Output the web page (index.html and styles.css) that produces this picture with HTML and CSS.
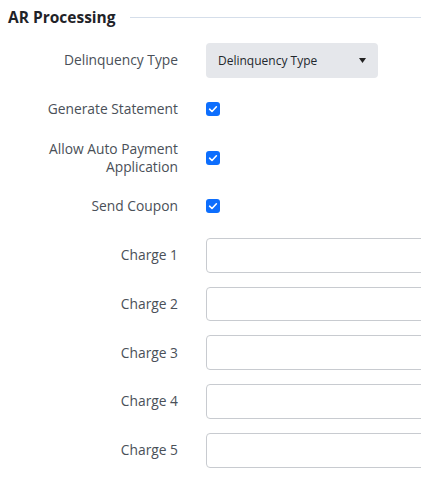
FILE: index.html
```html
<!DOCTYPE html>
<html>
<head>
<meta charset="utf-8">
<link rel="stylesheet" href="styles.css">
</head>
<body>
<div class="panel">
  <div class="section-head">
    <h2 class="section-title">AR Processing</h2>
    <div class="section-rule"></div>
  </div>
  <div class="form">
    <div class="row">
      <label class="label">Delinquency Type</label>
      <div class="select">
        <span>Delinquency Type</span>
        <svg class="caret" width="7" height="5" viewBox="0 0 7 5"><path d="M0 0H7L3.5 5Z" fill="#222"/></svg>
      </div>
    </div>
    <div class="row">
      <label class="label">Generate Statement</label>
      <span class="check"><svg width="14" height="14" viewBox="0 0 14 14"><path d="M3.6 7.2 L6 9.5 L10.4 4.8" fill="none" stroke="#fff" stroke-width="1.6" stroke-linecap="round" stroke-linejoin="round"/></svg></span>
    </div>
    <div class="row">
      <label class="label">Allow Auto Payment Application</label>
      <span class="check"><svg width="14" height="14" viewBox="0 0 14 14"><path d="M3.6 7.2 L6 9.5 L10.4 4.8" fill="none" stroke="#fff" stroke-width="1.6" stroke-linecap="round" stroke-linejoin="round"/></svg></span>
    </div>
    <div class="row">
      <label class="label">Send Coupon</label>
      <span class="check"><svg width="14" height="14" viewBox="0 0 14 14"><path d="M3.6 7.2 L6 9.5 L10.4 4.8" fill="none" stroke="#fff" stroke-width="1.6" stroke-linecap="round" stroke-linejoin="round"/></svg></span>
    </div>
    <div class="row">
      <label class="label">Charge 1</label>
      <div class="field-clip"><input class="text-input" type="text"></div>
    </div>
    <div class="row">
      <label class="label">Charge 2</label>
      <div class="field-clip"><input class="text-input" type="text"></div>
    </div>
    <div class="row">
      <label class="label">Charge 3</label>
      <div class="field-clip"><input class="text-input" type="text"></div>
    </div>
    <div class="row">
      <label class="label">Charge 4</label>
      <div class="field-clip"><input class="text-input" type="text"></div>
    </div>
    <div class="row">
      <label class="label">Charge 5</label>
      <div class="field-clip"><input class="text-input" type="text"></div>
    </div>
  </div>
</div>
</body>
</html>
```
FILE: styles.css
```css
html, body {
  margin: 0;
  padding: 0;
  overflow: hidden;
  background: #ffffff;
}
body {
  font-family: "Open Sans", "Noto Sans", sans-serif;
}
.panel {
  padding: 6px 0 0 8px;
}
.section-head {
  display: flex;
  align-items: center;
  gap: 14px;
  height: 22px;
}
.section-title {
  margin: 0;
  font-size: 15.5px;
  font-weight: 700;
  color: #1f2328;
  white-space: nowrap;
}
.section-rule {
  flex: 1;
  height: 1px;
  background: #d5deea;
}
.form {
  display: flex;
  flex-direction: column;
  gap: 14px;
  margin-top: 14.75px;
}
.row {
  display: grid;
  grid-template-columns: 170px 1fr;
  column-gap: 28px;
  align-items: center;
  height: 34.75px;
}
.label {
  text-align: right;
  font-size: 13.8px;
  line-height: 18px;
  color: #4a5058;
}
.select {
  box-sizing: border-box;
  width: 172px;
  height: 34.75px;
  background: #e5e7eb;
  border-radius: 4px;
  display: flex;
  align-items: center;
  justify-content: space-between;
  padding: 0 12px 0 12px;
  font-size: 12px;
  color: #23272d;
}
.caret {
  display: block;
}
.check {
  width: 14px;
  height: 14px;
  border-radius: 3px;
  background: #0d6efd;
  display: flex;
}
.field-clip {
  overflow: hidden;
  height: 34.75px;
}
.text-input {
  display: block;
  box-sizing: border-box;
  width: calc(100% + 12px);
  height: 34.75px;
  border: 1px solid #c8cbd0;
  border-radius: 4px;
  background: #fff;
  margin: 0;
  padding: 0 10px;
  font: inherit;
}
```
